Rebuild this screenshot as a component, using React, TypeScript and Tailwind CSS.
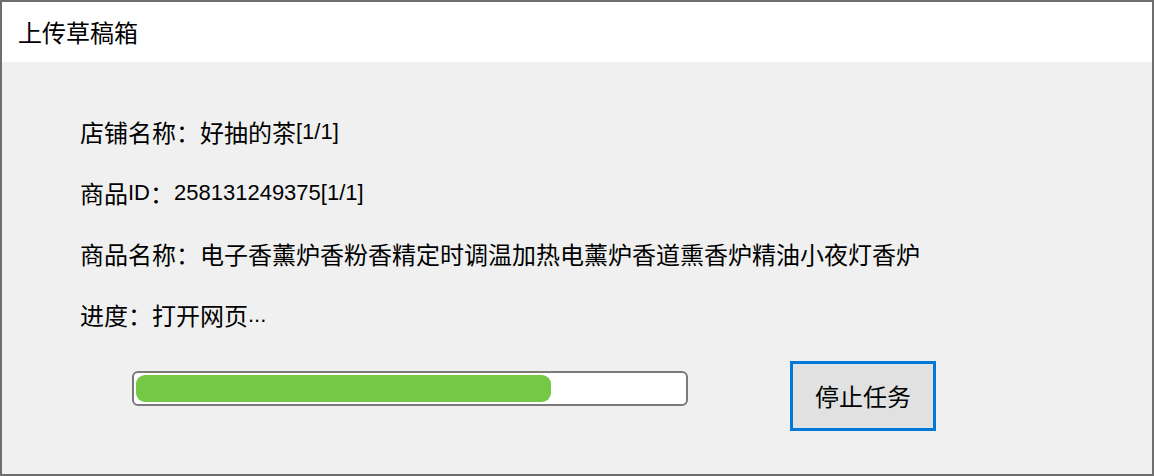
import React from 'react';

const cjk = "font-['Noto_Sans_CJK_SC',sans-serif]";
const latin = "font-['Liberation_Sans',sans-serif] text-[22px]";

function Latin({ children }: { children: React.ReactNode }) {
  return <span className={latin}>{children}</span>;
}

export default function App() {
  const progress = 75.7;

  return (
    <div className={`w-[1154px] h-[476px] border-2 border-[#6e6e6e] bg-[#f0f0f0] flex flex-col text-black ${cjk}`}>
      {/* Title bar */}
      <div className="h-[60px] shrink-0 bg-white flex items-center pl-[16px] text-[24px] leading-[30px]">
        上传草稿箱
      </div>

      {/* Body */}
      <div className="flex-1 pl-[78px] pt-[55px] text-[24px] leading-[30px]">
        <div className="flex flex-col gap-[31px]">
          <div className="h-[30px] flex items-center whitespace-nowrap">
            店铺名称：好抽的茶<Latin>[1/1]</Latin>
          </div>
          <div className="h-[30px] flex items-center whitespace-nowrap">
            商品<Latin>ID</Latin>：<Latin>258131249375[1/1]</Latin>
          </div>
          <div className="h-[30px] flex items-center whitespace-nowrap">
            商品名称：电子香薰炉香粉香精定时调温加热电薰炉香道熏香炉精油小夜灯香炉
          </div>
          <div className="h-[30px] flex items-center whitespace-nowrap">
            进度：打开网页<Latin>...</Latin>
          </div>
        </div>

        {/* Progress + stop button */}
        <div className="mt-[31px] flex items-start">
          <div className="ml-[52px] mt-[10px] w-[556px] h-[35px] border-2 border-[#7a7a7a] rounded-[6px] bg-white p-[2px] flex">
            <div className="h-full rounded-[9px] bg-[#74c845]" style={{ width: `${progress}%` }} />
          </div>
          <button className="ml-[102px] w-[146px] h-[70px] border-[3px] border-[#0078d7] bg-[#e1e1e1] text-[24px] leading-[30px] flex items-center justify-center">
            停止任务
          </button>
        </div>
      </div>
    </div>
  );
}
